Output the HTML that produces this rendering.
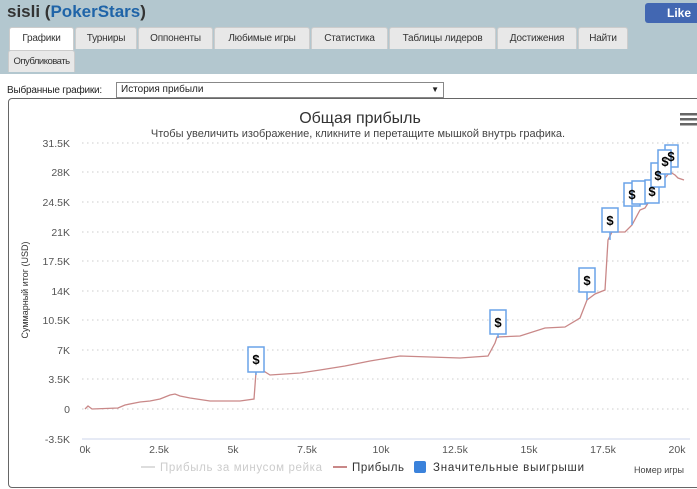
<!DOCTYPE html><html><head><meta charset="utf-8"><style>
body{margin:0;width:697px;height:489px;overflow:hidden;font-family:"Liberation Sans",sans-serif;background:#fff;position:relative}
.hdr{position:absolute;left:0;top:0;width:697px;height:74px;background:#b3c7cf}
.t{position:absolute;left:7px;top:2px;font-size:17px;font-weight:bold;color:#333}
.t span{color:#1f64a8}
.tab{position:absolute;height:21px;line-height:21px;font-size:10px;letter-spacing:-0.2px;color:#333;background:#e8e8e8;border:1px solid #ccc;border-bottom:none;border-radius:3px 3px 0 0;text-align:center;white-space:nowrap;overflow:hidden}
.like{position:absolute;left:645px;top:3px;width:60px;height:20px;background:#4267b2;border-radius:3px;color:#fff;font-weight:bold;font-size:12px;line-height:20px;padding-left:22px;box-sizing:border-box}
</style></head><body>
<div class="hdr"></div>
<div class="t">sisli (<span>PokerStars</span>)</div>
<div class="like">Like</div>
<div class="tab" style="left:9px;top:27px;width:63px;background:#fff;height:22px">Графики</div>
<div class="tab" style="left:75px;top:27px;width:60px">Турниры</div>
<div class="tab" style="left:138px;top:27px;width:73px">Оппоненты</div>
<div class="tab" style="left:214px;top:27px;width:94px">Любимые игры</div>
<div class="tab" style="left:311px;top:27px;width:75px">Статистика</div>
<div class="tab" style="left:389px;top:27px;width:105px">Таблицы лидеров</div>
<div class="tab" style="left:497px;top:27px;width:78px">Достижения</div>
<div class="tab" style="left:578px;top:27px;width:48px">Найти</div>
<div class="tab" style="left:8px;top:50px;width:65px;letter-spacing:-0.5px;font-size:9.5px">Опубликовать</div>
<div style="position:absolute;left:7px;top:85px;font-size:10px;color:#222;letter-spacing:-0.2px">Выбранные графики:</div>
<div style="position:absolute;left:116px;top:82px;width:322px;height:14px;border:1px solid #888;font-size:10px;line-height:14px;padding-left:4px;color:#222">История прибыли<span style="position:absolute;right:4px;font-size:8px">▼</span></div>
<div style="position:absolute;left:8px;top:98px;width:720px;height:388px;border:1px solid #666;border-radius:4px"></div>
<svg width="697" height="489" style="position:absolute;left:0;top:0" font-family="Liberation Sans,sans-serif">
<text x="360" y="123" font-size="16" text-anchor="middle" fill="#333">Общая прибыль</text>
<text x="358" y="137" font-size="11" text-anchor="middle" fill="#444">Чтобы увеличить изображение, кликните и перетащите мышкой внутрь графика.</text>
<g fill="#666"><rect x="680" y="113" width="17" height="2.5"/><rect x="680" y="118" width="17" height="2.5"/><rect x="680" y="123" width="17" height="2.5"/></g>
<g stroke="#ccc" stroke-dasharray="1.5,3.5">
<line x1="82" x2="690" y1="143" y2="143"/><line x1="82" x2="690" y1="172" y2="172"/><line x1="82" x2="690" y1="202" y2="202"/><line x1="82" x2="690" y1="232" y2="232"/><line x1="82" x2="690" y1="261" y2="261"/><line x1="82" x2="690" y1="291" y2="291"/><line x1="82" x2="690" y1="320" y2="320"/><line x1="82" x2="690" y1="350" y2="350"/><line x1="82" x2="690" y1="379" y2="379"/><line x1="82" x2="690" y1="409" y2="409"/></g>
<line x1="82" x2="690" y1="439" y2="439" stroke="#ccd6eb"/>
<g font-size="10.5" fill="#555" text-anchor="end">
<text x="70" y="147">31.5K</text><text x="70" y="176">28K</text><text x="70" y="206">24.5K</text><text x="70" y="236">21K</text><text x="70" y="265">17.5K</text><text x="70" y="295">14K</text><text x="70" y="324">10.5K</text><text x="70" y="354">7K</text><text x="70" y="383">3.5K</text><text x="70" y="413">0</text><text x="70" y="443">-3.5K</text></g>
<g font-size="10.5" fill="#555" text-anchor="middle">
<text x="85" y="453">0k</text><text x="159" y="453">2.5k</text><text x="233" y="453">5k</text><text x="307" y="453">7.5k</text><text x="381" y="453">10k</text><text x="455" y="453">12.5k</text><text x="529" y="453">15k</text><text x="603" y="453">17.5k</text><text x="677" y="453">20k</text></g>
<text x="28" y="290" font-size="9" fill="#333" text-anchor="middle" transform="rotate(-90 28 290)">Суммарный итог (USD)</text>
<polyline fill="none" stroke="#c98888" stroke-width="1.3" points="85,409 88,406 92,409 118,408 125,405 140,402 150,401 160,399 165,397 170,395 175,394 180,396 190,398 210,401 240,401 254,399 256,372 262,370 270,375 300,373 320,370 345,366 370,361 400,356 430,357 460,358 488,356 495,343 497,337 520,336 545,328 565,327 580,318 587,300 595,294 605,290 608,240 612,232 625,232 632,225 640,210 645,208 650,200 655,190 660,185 665,178 670,172 675,175 678,178 684,180"/>
<g stroke="#6aa3e8" fill="#fff" stroke-width="1.5">
<line x1="256" y1="372" x2="256" y2="375"/><line x1="498" y1="334" x2="498" y2="338"/><line x1="587" y1="292" x2="587" y2="300"/><line x1="610" y1="232" x2="610" y2="240"/><line x1="632" y1="205" x2="632" y2="225"/>
<rect x="248" y="347" width="16" height="25"/><rect x="490" y="310" width="16" height="24"/><rect x="579" y="268" width="16" height="24"/><rect x="602" y="208" width="16" height="24"/><rect x="624" y="183" width="16" height="23"/><rect x="632" y="181" width="14" height="23"/><rect x="645" y="180" width="14" height="23"/><rect x="651" y="163" width="14" height="24"/><rect x="665" y="145" width="13" height="22"/><rect x="658" y="150" width="13" height="24"/></g>
<g font-size="13" font-weight="bold" fill="#000" text-anchor="middle">
<text x="256" y="364">$</text><text x="498" y="327">$</text><text x="587" y="285">$</text><text x="610" y="225">$</text><text x="632" y="199">$</text><text x="652" y="196">$</text><text x="658" y="180">$</text><text x="671" y="161">$</text><text x="665" y="166">$</text></g>
<line x1="141" x2="155" y1="467" y2="467" stroke="#ddd" stroke-width="2"/>
<text x="160" y="471" font-size="11.5" fill="#ccc" textLength="162">Прибыль за минусом рейка</text>
<line x1="333" x2="347" y1="467" y2="467" stroke="#c98888" stroke-width="2"/>
<text x="352" y="471" font-size="11.5" fill="#333" textLength="52">Прибыль</text>
<rect x="414" y="461" width="12" height="12" rx="2" fill="#3b82db"/>
<text x="433" y="471" font-size="11.5" fill="#333" textLength="151">Значительные выигрыши</text>
<text x="634" y="473" font-size="9" fill="#444">Номер игры</text>
</svg>
</body></html>
